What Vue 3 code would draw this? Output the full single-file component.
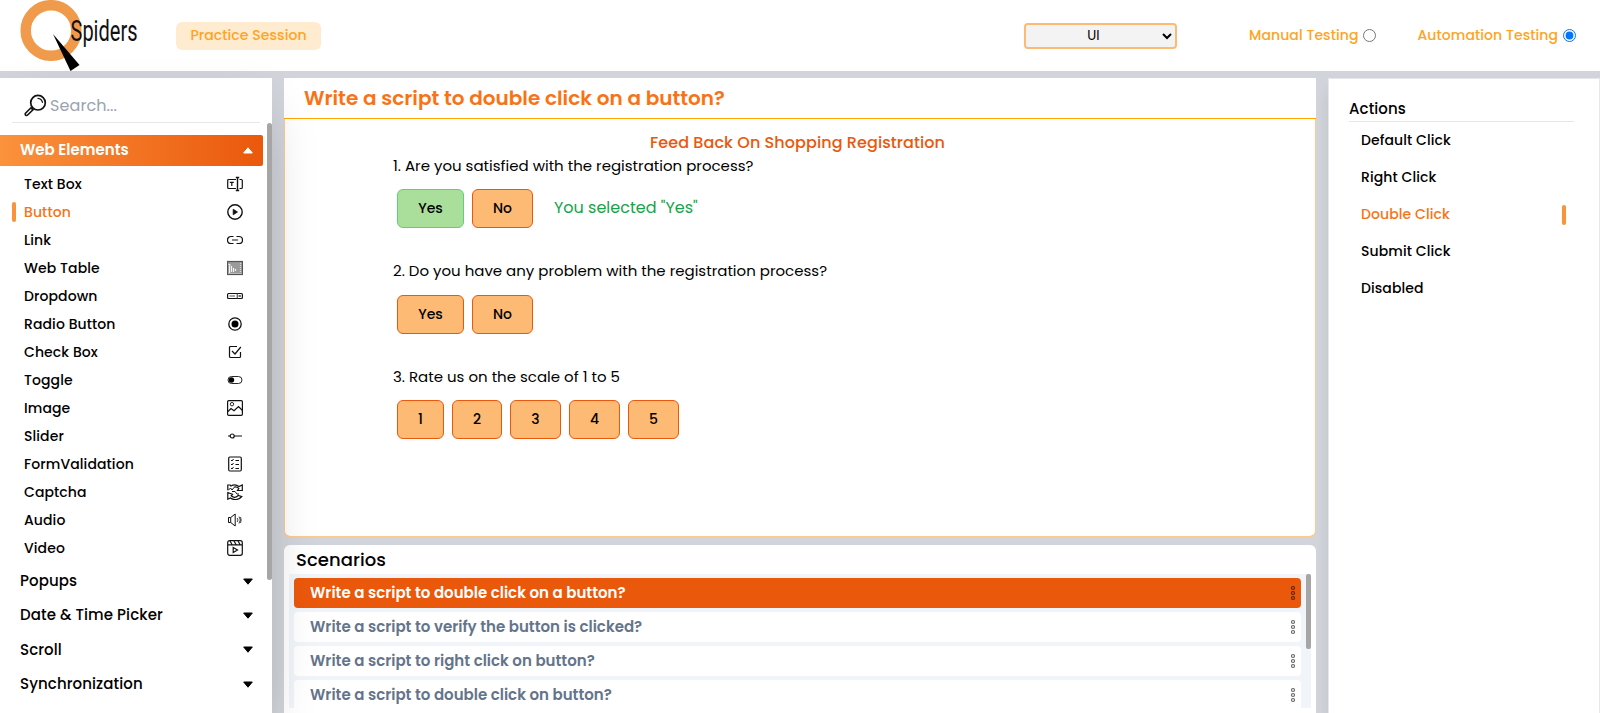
<script setup>
import { ref } from 'vue'

const area = ref('UI')
const mode = ref('automation')

const elements = [
  { name: 'Text Box', icon: '<path d="M9 3.500H1.700q-1 0-1 1v7q0 1 1 1H9M12.500 3.500h1.800q1 0 1 1v7q0 1-1 1h-1.800"/><path d="M10.500 1.500v13M8.800 1.500h3.400M8.800 14.500h3.400" stroke-width="1.400"/><path d="M2.800 6.300h4M4.800 6v4"/>' },
  { name: 'Button', active: true, icon: '<circle cx="8" cy="8" r="7.200" stroke-width="1.400"/><path d="M6.200 5.200l4.300 2.800-4.300 2.800z" fill="#111" stroke-width=".8"/>' },
  { name: 'Link', icon: '<path d="M6.500 4.500H4a3.400 3.400 0 0 0 0 7h2.500M9.500 4.500H12a3.400 3.400 0 0 1 0 7H9.500M5 8h6"/>' },
  { name: 'Web Table', icon: '<rect x=".5" y="1.500" width="15" height="13" fill="#9a9a9a" stroke="#555"/><path d="M2.500 4v9M4.500 6v6M6.500 8v4M8.500 9v2M1.500 4l2 1.500" stroke="#f2f2f2"/><path d="M1.500 13.500h13M13.500 3v10" stroke="#ddd" stroke-dasharray="1 1"/>' },
  { name: 'Dropdown', icon: '<rect x=".6" y="5.500" width="14.800" height="5" rx="1"/><path d="M2.500 8h5.500M10.300 5.500v5" stroke="#555"/><path d="M11.700 7l2 2M13.700 7l-2 2" stroke-width=".8"/>' },
  { name: 'Radio Button', icon: '<circle cx="8" cy="8" r="6.200" stroke-width="1.300"/><circle cx="8" cy="8" r="3.500" fill="#000" stroke="none"/>' },
  { name: 'Check Box', icon: '<path d="M10 2.500H3.500q-1 0-1 1v9q0 1 1 1h9q1 0 1-1V8"/><path d="M5 7l3 3 5.800-7"/>' },
  { name: 'Toggle', icon: '<rect x="1" y="4.500" width="14" height="7" rx="3.500" stroke-width=".9"/><circle cx="4.500" cy="8" r="2.700" fill="#000" stroke="none"/>' },
  { name: 'Image', icon: '<rect x=".6" y=".6" width="14.800" height="14.800" rx="1.200"/><circle cx="5" cy="4.200" r="1.700" stroke-width=".9"/><path d="M1 11.500l3-3 3 2.300 4.500-4.300 4 4"/>' },
  { name: 'Slider', icon: '<path d="M1 8h2M7 8h8"/><circle cx="5.200" cy="8" r="2"/>' },
  { name: 'FormValidation', icon: '<rect x="1.700" y="1" width="12.600" height="14" rx="1.200"/><path d="M8.500 4.500H12M8.500 8.500H12M8.500 12.500H12M4 4l1 1 1.500-2M4 8l1 1 1.500-2M4 12l1 1 1.500-2" stroke-width="1"/>' },
  { name: 'Captcha', icon: '<path d="M.8 6V1h2.500l.6 1C6.500.4 9.500.5 12 2.500L15.300 1v5.500h-4.800l1.300-2C10.300 3 8.500 2.600 6.800 3.200M.8 15.200V8.500l4.700 1.700-1.300 1.600c2.300 2 5 1.700 7-.3l3.600 1c-3 3.600-8 4-11.300 1.500z"/><path d="M1 6.500l2.500-2.500L5 6l2-2.500M5 7.500h3l2 2.500h2" stroke-width="1"/>' },
  { name: 'Audio', icon: '<path d="M1.500 5.500h2.200L8.200 2v12l-4.500-3.500H1.500zM3.700 5.500v5" stroke-width="1"/><path d="M10.200 6q1.500 2 0 4M12 4.500q2.700 3.500 0 7M13.500 5q1.300 3 0 6" stroke-width=".8"/>' },
  { name: 'Video', icon: '<rect x=".7" y=".7" width="14.600" height="14.600" rx="2"/><path d="M1 4.800h14M3 1l2 3.500M7 1l2 3.500M11 1l2 3.500"/><path d="M6.200 7.500l4.300 2.500-4.300 2.500z"/>' },
]

const groups = ['Popups', 'Date & Time Picker', 'Scroll', 'Synchronization']

const questions = [
  { text: '1. Are you satisfied with the registration process?', answers: [{ t: 'Yes', w: 67, on: true }, { t: 'No', w: 61 }], note: 'You selected "Yes"' },
  { text: '2. Do you have any problem with the registration process?', answers: [{ t: 'Yes', w: 67 }, { t: 'No', w: 61 }] },
  { text: '3. Rate us on the scale of 1 to 5', answers: [{ t: '1', w: 47 }, { t: '2', w: 50 }, { t: '3', w: 51 }, { t: '4', w: 51 }, { t: '5', w: 51 }] },
]

const scenarios = [
  { text: 'Write a script to double click on a button?', active: true },
  { text: 'Write a script to verify the button is clicked?' },
  { text: 'Write a script to right click on button?' },
  { text: 'Write a script to double click on button?' },
]

const actions = [
  { name: 'Default Click' },
  { name: 'Right Click' },
  { name: 'Double Click', active: true },
  { name: 'Submit Click' },
  { name: 'Disabled' },
]
</script>

<template>
  <div class="app">
    <header class="top">
      <svg class="logo" width="125" height="71" viewBox="0 0 125 71">
        <circle cx="31" cy="30.500" r="25.300" fill="none" stroke="#f09a4b" stroke-width="10.500" />
        <polygon points="33,34 59.500,65 50.500,71" fill="#000" />
        <text x="50.500" y="41" textLength="67" lengthAdjust="spacingAndGlyphs">Spiders</text>
      </svg>
      <div class="session">Practice Session</div>
      <select v-model="area" class="area"><option>UI</option></select>
      <label class="mode manual"><span>Manual Testing</span><input v-model="mode" type="radio" value="manual" /></label>
      <label class="mode"><span>Automation Testing</span><input v-model="mode" type="radio" value="automation" /></label>
    </header>

    <div class="body">
      <aside class="side">
        <div class="search">
          <svg width="23" height="23" viewBox="0 0 23 23" fill="none" stroke="#111">
            <circle cx="14" cy="8.700" r="7.300" stroke-width="1.700" />
            <path d="M14 4.300q3.500.3 4.500 4" stroke-width="1.300" stroke-linecap="round" />
            <path d="M8.700 14L7.500 15.200" stroke-width="2" />
            <path d="M7 13.800L1.500 19.200q-.7 1 .1 1.900 1 .9 2-.1L9 15.700z" stroke-width="1.600" />
          </svg>
          <span>Search...</span>
        </div>
        <div class="tree">
          <div class="list">
            <div class="group open">
              <span>Web Elements</span>
              <svg width="10" height="7" viewBox="0 0 10 7"><path d="M5 .8L9.300 6H.7z" fill="#fff" stroke="#fff" stroke-linejoin="round" /></svg>
            </div>
            <div class="items">
              <div v-for="e in elements" :key="e.name" class="item" :class="{ active: e.active }">
                <i class="mark"></i>
                <span>{{ e.name }}</span>
                <svg class="icon" width="16" height="16" viewBox="0 0 16 16" v-html="e.icon"></svg>
              </div>
            </div>
            <div v-for="g in groups" :key="g" class="group">
              <span>{{ g }}</span>
              <svg width="10" height="7" viewBox="0 0 10 7"><path d="M5 6.200L9.300 1H.7z" fill="#000" stroke="#000" stroke-linejoin="round" /></svg>
            </div>
          </div>
          <div class="bar side-bar"></div>
        </div>
      </aside>

      <main class="main">
        <section class="demo">
          <h1>Write a script to double click on a button?</h1>
          <div class="stage">
            <h2>Feed Back On Shopping Registration</h2>
            <div v-for="q in questions" :key="q.text" class="question">
              <p>{{ q.text }}</p>
              <div class="answers">
                <button v-for="a in q.answers" :key="a.t" :class="{ on: a.on }" :style="{ width: a.w + 'px' }">{{ a.t }}</button>
                <span v-if="q.note" class="note">{{ q.note }}</span>
              </div>
            </div>
          </div>
        </section>
        <section class="scen">
          <h3>Scenarios</h3>
          <div class="scroll">
            <div class="rows">
              <div v-for="s in scenarios" :key="s.text" class="row" :class="{ active: s.active }">
                <span>{{ s.text }}</span>
                <svg width="6" height="16" viewBox="0 0 6 16" fill="none" stroke="#000" stroke-opacity=".6" stroke-width="1.200">
                  <circle cx="3" cy="3" r="1.500" /><circle cx="3" cy="8" r="1.500" /><circle cx="3" cy="13" r="1.500" />
                </svg>
              </div>
            </div>
            <div class="bar rows-bar"></div>
          </div>
        </section>
      </main>

      <aside class="acts">
        <h4>Actions</h4>
        <div v-for="a in actions" :key="a.name" class="act" :class="{ active: a.active }">
          <span>{{ a.name }}</span><i class="mark"></i>
        </div>
      </aside>
    </div>
  </div>
</template>

<style>
body { margin: 0; overflow: hidden; }
</style>

<style scoped>
* { box-sizing: border-box; margin: 0; }
.app {
  width: 1600px; height: 713px; overflow: hidden; display: flex; flex-direction: column;
  background: #d1d5db; color: #000; white-space: nowrap;
  font: 500 14px Poppins, Inter, "Open Sans", sans-serif; letter-spacing: .09px;
}
.top { height: 71px; flex: none; background: #fff; display: flex; align-items: center; padding: 0 24px 0 20px; letter-spacing: .08px; }
.logo { flex: none; align-self: flex-start; overflow: visible; }
.logo text { font: 400 29px Roboto, sans-serif; letter-spacing: 0; fill: #111; }
.session {
  width: 145px; height: 28px; margin-left: 31px; border-radius: 6px; background: #ffebd0;
  display: flex; align-items: center; justify-content: center; color: #ffa41c;
}
.area {
  width: 153px; height: 26px; margin-left: 703px; border: 2px solid #fdba74; border-radius: 4px; background: #f3f3f3;
  text-align: center; font: 400 13.330px Poppins, Inter, sans-serif; color: #000; padding: 0 2px 0 0;
}
.mode { display: flex; align-items: center; gap: 5px; color: #ffa41c; }
.mode.manual { margin-left: auto; margin-right: 41px; }
.mode input { width: 13px; height: 13px; margin: 0; }

.body { flex: 1; min-height: 0; display: flex; padding-top: 7px; }
.side {
  width: 272px; flex: none; background: #fff; display: flex; flex-direction: column;
  position: relative; z-index: 2; box-shadow: 0 25px 50px -12px rgba(0, 0, 0, .25);
}
.search {
  height: 45px; margin: 0 12px; border-bottom: 1px solid #e5e7eb; width: 248px; flex: none;
  display: flex; align-items: center; gap: 3px; padding: 11px 0 0 12px;
  font-weight: 400; font-size: 16px; color: #9ca3af;
}
.tree { flex: 1; min-height: 0; display: flex; justify-content: space-between; }
.list { width: 263px; padding-top: 12px; }
.bar { width: 5px; background: #a6a6a6; }
.side-bar { height: 457px; border-radius: 3px; }
.group { height: 34.400px; display: flex; align-items: center; justify-content: space-between; padding: 0 10.500px 0 20px; font-size: 15px; }
.group span { padding-bottom: 1.500px; }
.group.open {
  height: 31px; color: #fff; font-weight: 600; letter-spacing: 0; border-radius: 0 2px 2px 0; padding-bottom: 1px;
  background: linear-gradient(to right, #fb923c, #ea580c);
}
.items { padding: 4px 0 2px; }
.item { height: 28px; display: flex; align-items: center; padding: 0 20px 0 12px; }
.mark { width: 4px; height: 20px; border-radius: 2px; visibility: hidden; }
.item .mark { margin-right: 8px; }
.active .mark { visibility: visible; background: #fb923c; }
.item.active, .act.active { color: #f97316; }
.icon { margin-left: auto; fill: none; stroke: #111; stroke-width: 1.200; }

.main { width: 1032px; margin-left: 12px; flex: none; display: flex; flex-direction: column; gap: 7px; position: relative; z-index: 1; letter-spacing: 0; }
.demo { height: 460px; background: #fff; border: 1px solid #fdc98f; border-top: 0; border-bottom-width: 2px; border-radius: 0 0 7px 7px; }
h1 {
  height: 41px; margin: 0 -1px; padding: 0 0 1px 20px; background: #fff; border-bottom: 1px solid #ffa500;
  display: flex; align-items: center; font-size: 20px; font-weight: 600; color: #f97316;
}
.stage { padding: 11px 0 0 108px; }
h2 { height: 24px; margin-left: -108px; display: flex; align-items: center; justify-content: center; font-size: 16px; font-weight: 500; letter-spacing: .075px; color: #ea580c; padding-right: 5px; }
.question { height: 105.500px; }
.question p { height: 23px; padding-bottom: 1px; display: flex; align-items: center; font-size: 15px; font-weight: 400; }
.answers { display: flex; align-items: center; gap: 8px; padding: 12px 0 0 4px; }
.answers button {
  height: 39px; padding: 0; border: 1px solid #ea580c; border-radius: 6px; background: #fdba74;
  font: 500 14px Poppins, Inter, sans-serif; color: #000;
}
.answers button.on { background: #a9df9b; border-color: #5fcf7a; }
.note { margin-left: 13px; padding-bottom: 2px; font-size: 16px; font-weight: 400; color: #16a34a; }

.scen { flex: 1; min-height: 0; background: #fff; border-radius: 6px 6px 0 0; padding: 0 5px; }
h3 { height: 29px; padding-left: 7px; display: flex; align-items: center; font-size: 18px; font-weight: 500; letter-spacing: .06px; }
.scroll { height: 134px; overflow: hidden; background: #f1f5f9; display: flex; justify-content: space-between; }
.rows { width: 1012px; padding: 4px 0 0 5px; }
.row {
  width: 1007px; height: 30px; margin-bottom: 4px; padding: 0 5px 0 16px; border-radius: 4px; background: #fff;
  display: flex; align-items: center; justify-content: space-between; font-size: 15px; font-weight: 600; color: #64748b;
}
.row span { padding-bottom: 1.500px; }
.row.active { background: #ea580c; color: #fff; }
.rows-bar { height: 75px; border-radius: 2px; }

.acts {
  width: 272px; margin-left: 12px; flex: none; background: #fff; border: 1px solid #e5e7eb; border-bottom: 0; padding: 17px 25px 0 20px;
  box-shadow: 0 10px 15px -3px rgba(0, 0, 0, .12);
}
h4 { height: 26px; border-bottom: 1px solid #e5e7eb; display: flex; align-items: center; font-size: 15px; font-weight: 500; }
.act { height: 37px; padding: 0 8px 0 12px; display: flex; align-items: center; justify-content: space-between; }
</style>
